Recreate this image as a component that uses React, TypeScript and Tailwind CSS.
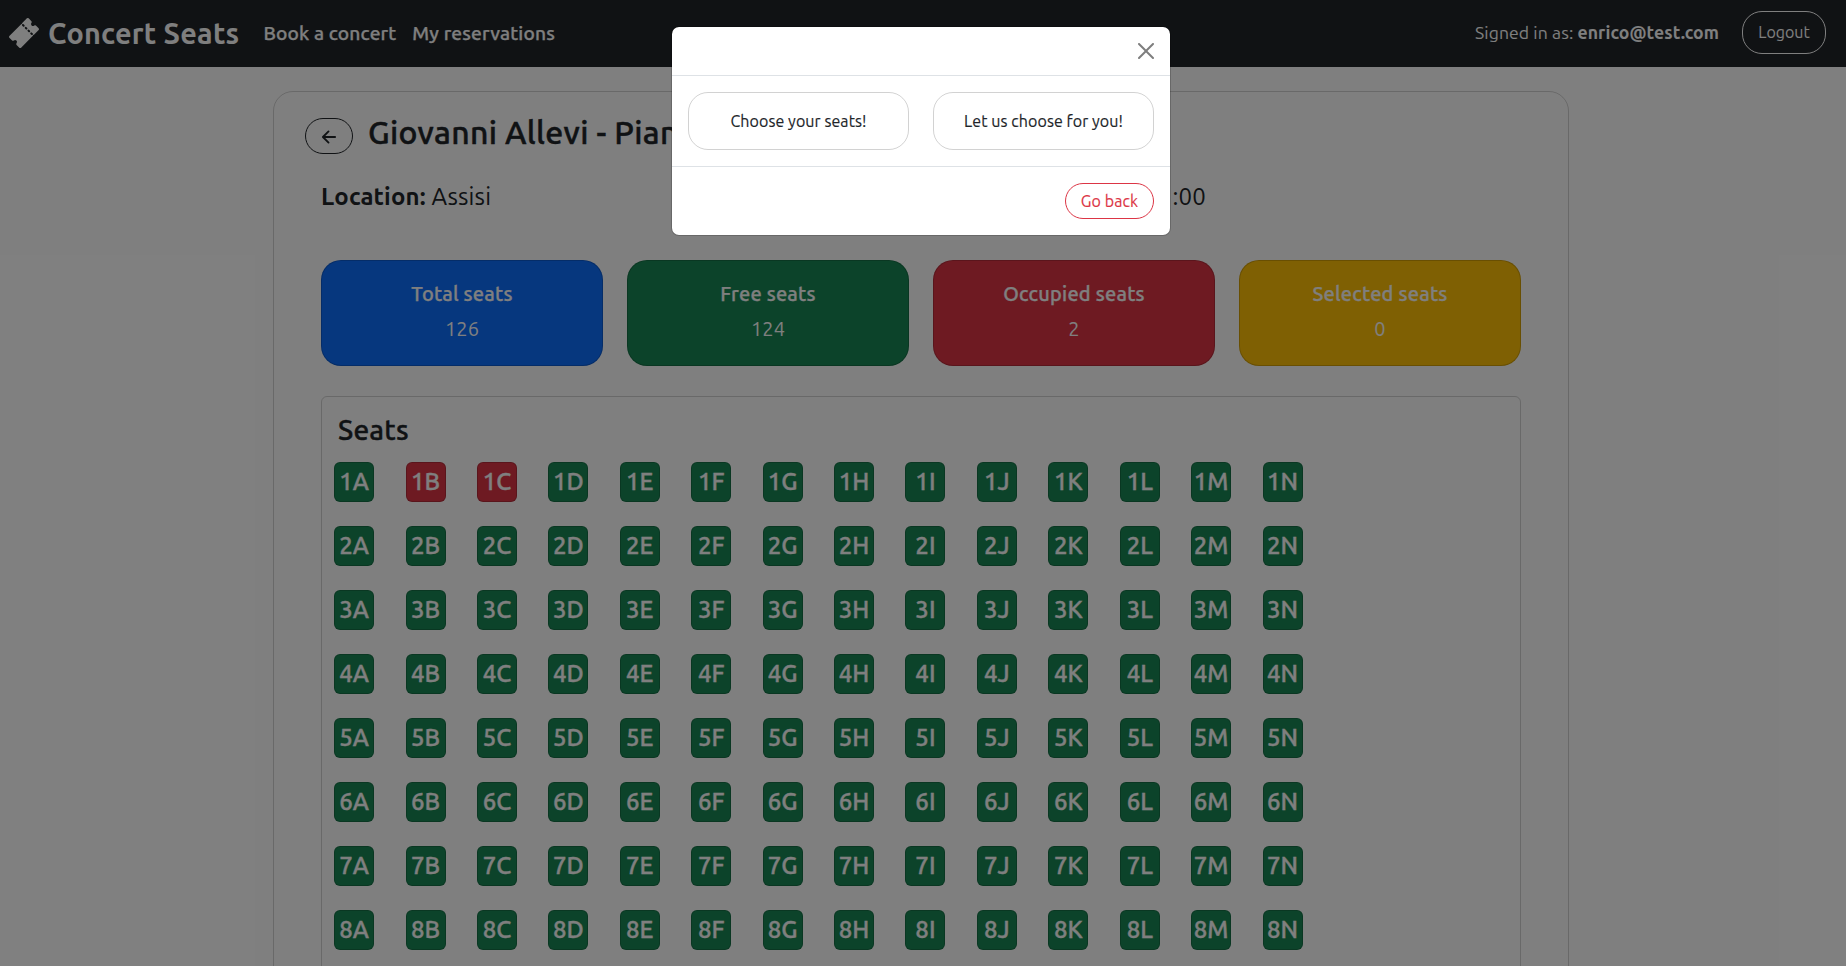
import React from "react";
import { IoArrowBack, IoTicket } from "react-icons/io5";

const ROWS = [1, 2, 3, 4, 5, 6, 7, 8];
const COLUMNS = "ABCDEFGHIJKLMN".split("");
const OCCUPIED = new Set(["1B", "1C"]);

const STATS = [
  { label: "Total seats", value: 126, color: "bg-[#0d6efd]" },
  { label: "Free seats", value: 124, color: "bg-[#198754]" },
  { label: "Occupied seats", value: 2, color: "bg-[#dc3545]" },
  { label: "Selected seats", value: 0, color: "bg-[#ffc107]" },
];

function Navbar() {
  return (
    <nav className="flex h-[67px] items-center bg-[#212529] pr-5 pb-0.5 pl-2 text-white">
      <IoTicket className="mt-px size-8 shrink-0" />
      <span className="ml-2 text-[28.8px] leading-9 font-bold tracking-[0.25px]">Concert Seats</span>
      <div className="ml-6 flex gap-4 text-[19.2px] leading-7 font-medium tracking-[0.15px] [-webkit-text-stroke:0.25px]">
        <a>Book a concert</a>
        <a>My reservations</a>
      </div>
      <div className="ml-auto flex items-center">
        <span className="text-[17.6px] leading-6 tracking-[0.1px]">
          Signed in as: <b className="font-bold">enrico@test.com</b>
        </span>
        <button className="ml-[23px] h-[43px] w-[84px] rounded-[20px] border border-white pb-px text-base">
          Logout
        </button>
      </div>
    </nav>
  );
}

function StatCard({ label, value, color }: { label: string; value: number; color: string }) {
  return (
    <div
      className={`h-[106px] rounded-[20px] border border-black/[0.175] pt-[21px] text-center text-xl text-white ${color}`}
    >
      <div className="leading-6 font-medium tracking-[0.2px] [-webkit-text-stroke:0.25px]">{label}</div>
      <div className="mt-2 leading-[30px]">{value}</div>
    </div>
  );
}

function SeatMap() {
  return (
    <section className="mt-[30px] rounded-md border border-black/[0.175] pt-4 pb-16">
      <h4 className="ml-4 text-[28px] leading-[34px] font-medium tracking-[0.2px] [-webkit-text-stroke:0.4px]">
        Seats
      </h4>
      <div className="mt-[15px] ml-[12.08px] flex flex-col gap-6">
        {ROWS.map((row) => (
          <div key={row} className="flex">
            {COLUMNS.map((column) => {
              const seat = `${row}${column}`;
              return (
                <div key={seat} className="w-[71.425px]">
                  <div
                    className={`flex size-10 items-center justify-center rounded-md border border-black/[0.175] text-2xl leading-[30px] font-medium text-white [-webkit-text-stroke:0.35px] ${
                      OCCUPIED.has(seat) ? "bg-[#dc3545]" : "bg-[#198754]"
                    }`}
                  >
                    {seat}
                  </div>
                </div>
              );
            })}
          </div>
        ))}
      </div>
    </section>
  );
}

function ChoiceModal() {
  return (
    <div className="absolute inset-0 flex items-start justify-center bg-black/50 pt-[26px] pr-1">
      <div className="w-[500px] rounded-lg border border-black/[0.175] bg-white bg-clip-padding">
        <header className="flex h-[49px] items-center justify-end border-b border-[#dee2e6] px-4">
          <svg viewBox="0 0 16 16" className="size-4 opacity-50" fill="#000">
            <path d="M.293.293a1 1 0 0 1 1.414 0L8 6.586 14.293.293a1 1 0 1 1 1.414 1.414L9.414 8l6.293 6.293a1 1 0 0 1-1.414 1.414L8 9.414l-6.293 6.293a1 1 0 0 1-1.414-1.414L6.586 8 .293 1.707a1 1 0 0 1 0-1.414z" />
          </svg>
        </header>
        <div className="grid grid-cols-2 gap-6 p-4 tracking-[0.08px] [-webkit-text-stroke:0.15px]">
          <button className="h-[58px] rounded-[20px] border border-black/[0.175]">Choose your seats!</button>
          <button className="h-[58px] rounded-[20px] border border-black/[0.175]">Let us choose for you!</button>
        </div>
        <footer className="flex justify-end border-t border-[#dee2e6] p-4">
          <button className="h-9 w-[89px] rounded-[20px] border border-[#dc3545] tracking-[0.08px] text-[#dc3545] [-webkit-text-stroke:0.15px]">
            Go back
          </button>
        </footer>
      </div>
    </div>
  );
}

export default function App() {
  return (
    <div className="relative h-[966px] overflow-hidden bg-white font-['Ubuntu','Open_Sans',sans-serif] text-base text-[#212529]">
      <Navbar />
      <main className="mt-6 ml-[273px] w-[1296px] rounded-[20px] border border-black/[0.175]">
        <div className="flex items-start pt-5 pl-[31px]">
          <button className="mt-1.5 flex h-9 w-12 items-center justify-center rounded-[20px] border border-[#212529] pt-0.5">
            <IoArrowBack className="size-5 [stroke-width:10px]" />
          </button>
          <h2 className="ml-[15px] text-[32px] leading-10 font-medium tracking-[0.3px] [-webkit-text-stroke:0.45px]">
            Giovanni Allevi - Piano
          </h2>
        </div>
        <div className="px-[47px]">
          <div className="mt-[25px] grid h-9 grid-cols-[612px_273px] text-2xl leading-9 tracking-[0.15px]">
            <div>
              <b className="font-bold">Location:</b> Assisi
            </div>
            <div className="flex justify-between">
              <b className="font-bold">Date:</b>
              <span>21:00</span>
            </div>
          </div>
          <div className="mt-[45px] grid grid-cols-4 gap-6">
            {STATS.map((stat) => (
              <StatCard key={stat.label} {...stat} />
            ))}
          </div>
          <SeatMap />
        </div>
      </main>
      <ChoiceModal />
    </div>
  );
}
